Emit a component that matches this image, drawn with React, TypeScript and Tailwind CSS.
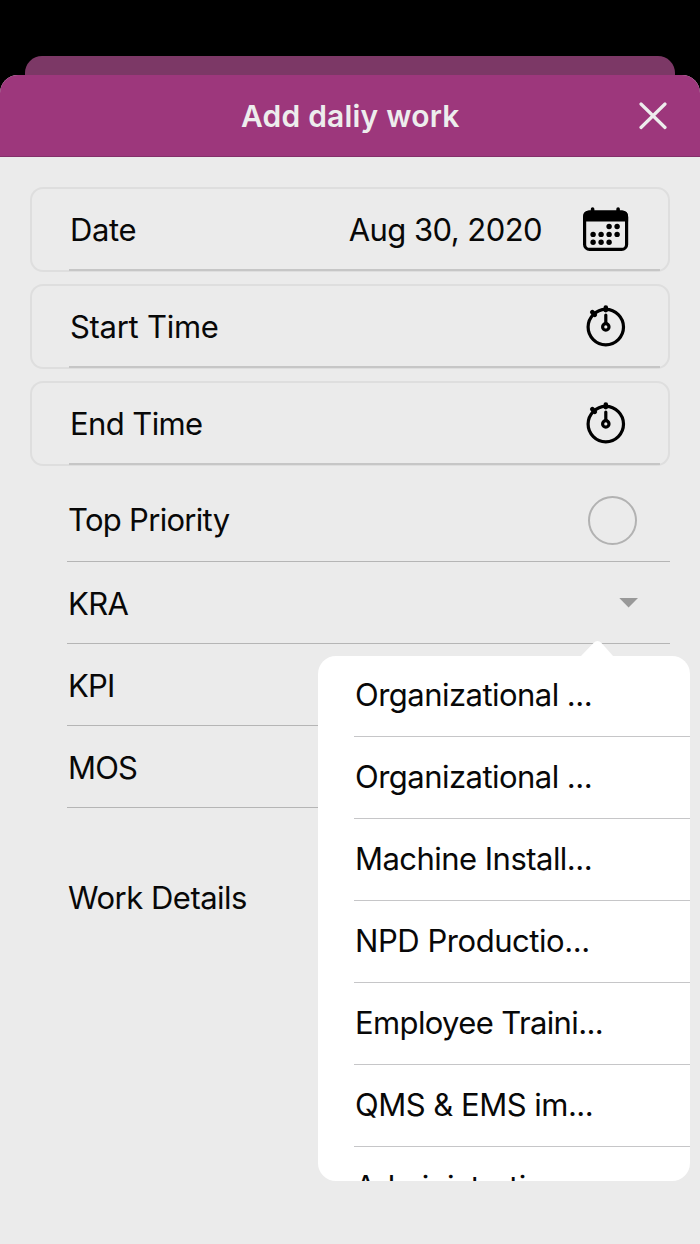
import type { ReactNode } from "react";

const kraOptions = [
  { label: "Organizational ...", tracking: "tracking-[-0.53px]" },
  { label: "Organizational ...", tracking: "tracking-[-0.53px]" },
  { label: "Machine Install...", tracking: "tracking-[-0.53px]" },
  { label: "NPD Productio...", tracking: "tracking-[-0.45px]" },
  { label: "Employee Traini...", tracking: "tracking-[-0.63px]" },
  { label: "QMS & EMS im...", tracking: "tracking-[-0.5px]" },
  { label: "Administrative ...", tracking: "tracking-[-0.25px]" },
];

function CalendarIcon() {
  const dots = [
    [26.5, 19.5], [34.5, 19.5],
    [10.5, 27.4], [18.5, 27.4], [26.5, 27.4], [34.5, 27.4],
    [10.5, 35.3], [18.5, 35.3], [26.5, 35.3],
  ];
  return (
    <svg className="h-[46px] w-[46px]" viewBox="0.4 0 46 46">
      <path d="M10 2v7M35.5 2v7" stroke="black" strokeWidth="3.6" strokeLinecap="round" />
      <rect x="2" y="5" width="42" height="37.4" rx="5" fill="none" stroke="black" strokeWidth="3.2" />
      <path d="M.5 14.4V9A5.5 5.5 0 0 1 6 3.5h34A5.5 5.5 0 0 1 45.5 9v5.4Z" />
      {dots.map(([cx, cy]) => (
        <circle key={`${cx}-${cy}`} cx={cx} cy={cy} r="2.7" />
      ))}
    </svg>
  );
}

function TimerIcon() {
  return (
    <svg className="relative -top-px mr-[3px] h-[42px] w-[40px]" viewBox="0.2 0.4 40 42" fill="none" stroke="black">
      <circle cx="20" cy="22.5" r="17.7" strokeWidth="3.2" />
      <path d="M20 3v2.5M6.5 7.5l2.5 2.7" strokeWidth="4.6" strokeLinecap="round" />
      <path d="M20 10.5v8" strokeWidth="3.2" strokeLinecap="round" />
      <circle cx="20" cy="22.3" r="3.2" strokeWidth="3.2" />
    </svg>
  );
}

function FieldCard({ label, children }: { label: ReactNode; children: ReactNode }) {
  return (
    <div className="h-[85px] rounded-[13px] border-2 border-[#dedede] pr-2 pl-[37px]">
      <div className="flex h-[82px] items-center justify-between border-b-2 border-[#c6c6c6] pt-px pr-[31px] pl-px">
        {label}
        <div className="flex items-center">{children}</div>
      </div>
    </div>
  );
}

function FieldRow({ label, children }: { label: ReactNode; children?: ReactNode }) {
  return (
    <div className="flex h-[82px] items-center justify-between border-b border-[#b5b5b5] pt-[3px] pr-8 pl-px">
      {label}
      {children}
    </div>
  );
}

function KraMenu() {
  return (
    <div className="absolute top-[656px] left-[318px] w-[372px]">
      <svg className="absolute -top-[16px] left-[262px] h-[17px] w-[34px]" viewBox="0 0 34 17" fill="white">
        <path d="M0 17 13.5 3Q17.5-1 21.5 3L34 17Z" />
      </svg>
      <ul className="h-[525px] overflow-hidden rounded-[18px] bg-white pl-9">
        {kraOptions.map((option, i) => (
          <li key={i} className="flex h-[82px] items-center border-b border-[#c6c6c8] pb-px pl-px first:h-[81px] first:pb-[2px]">
            <span className={option.tracking}>{option.label}</span>
          </li>
        ))}
      </ul>
    </div>
  );
}

export default function App() {
  return (
    <div className="relative h-[1244px] w-[700px] overflow-hidden bg-black font-['Inter',sans-serif] text-[31px] leading-[38px] whitespace-nowrap text-[#080808]">
      <div className="mx-[25px] mt-14 h-[19px] rounded-t-[17px] bg-[#7c3866]" />

      <div className="h-[1169px] overflow-hidden rounded-t-[18px] bg-[#ebebeb]">
        <header className="flex h-[82px] items-center border-b border-[#83306a] bg-[#9d377c] pr-[33px] pl-[241px] text-[#ededed]">
          <h1 className="flex-1 text-[30px] font-semibold tracking-[0.2px]">Add daliy work</h1>
          <svg className="h-7 w-7" viewBox="0 0 28 28" fill="none" stroke="currentColor" strokeWidth="3.2" strokeLinecap="round">
            <path d="M2 2 26 25.5M26 2 2 25.5" />
          </svg>
        </header>

        <div className="flex flex-col gap-3 px-[30px] pt-[30px]">
          <FieldCard label={<span className="tracking-[-0.4px]">Date</span>}>
            <span className="mr-[41px] tracking-[-0.55px]">Aug 30, 2020</span>
            <CalendarIcon />
          </FieldCard>
          <FieldCard label={<span className="tracking-[-0.28px]">Start Time</span>}>
            <TimerIcon />
          </FieldCard>
          <FieldCard label={<span className="tracking-[-0.6px]">End Time</span>}>
            <TimerIcon />
          </FieldCard>
        </div>

        <div className="mt-[14px] mr-[30px] ml-[67px]">
          <FieldRow label={<span className="-mt-1 tracking-[-0.7px]">Top Priority</span>}>
            <span className="-mt-[3px] mr-px h-[49px] w-[49px] rounded-full border-2 border-[#b2b2b2]" />
          </FieldRow>
          <FieldRow label={<span className="tracking-[-0.7px]">KRA</span>}>
            <svg className="-mt-[3px] h-[10px] w-[19px]" viewBox="0 0 19 10" fill="#999999">
              <path d="M0.3 0h18.7l-9.4 9.5Z" />
            </svg>
          </FieldRow>
          <FieldRow label={<span className="tracking-[-0.8px]">KPI</span>} />
          <FieldRow label={<span className="tracking-[-0.8px]">MOS</span>} />
          <p className="mt-[71px] pl-px tracking-[-0.5px]">Work Details</p>
        </div>
      </div>

      <KraMenu />
    </div>
  );
}
